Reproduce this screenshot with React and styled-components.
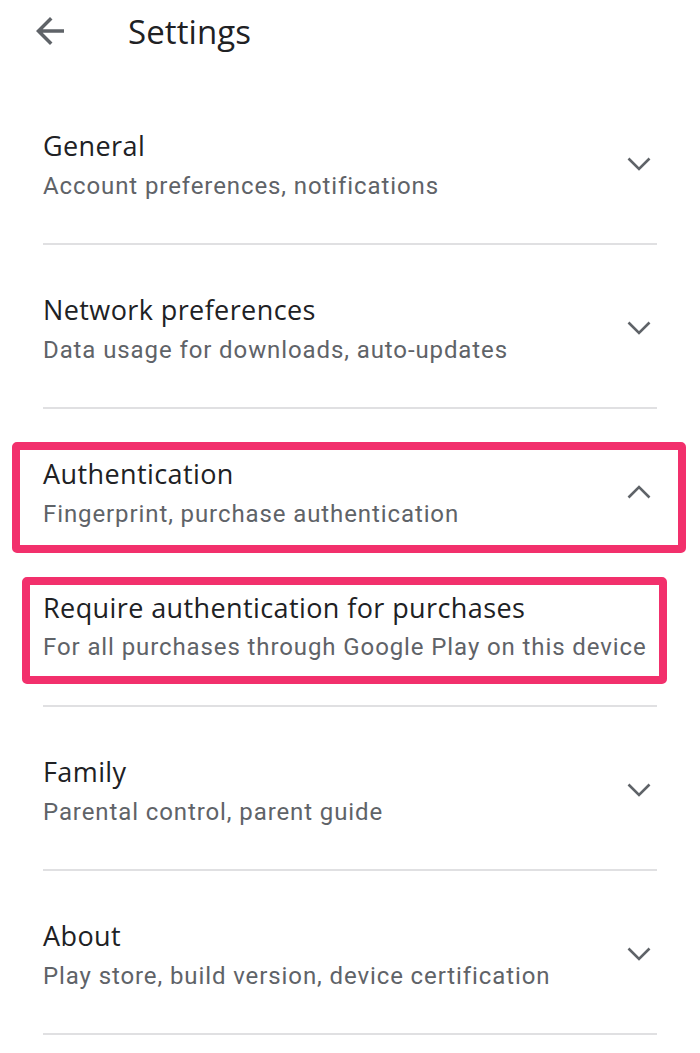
import React from "react";
import styled, { createGlobalStyle } from "styled-components";

const Global = createGlobalStyle`
  html, body { margin: 0; padding: 0; background: #ffffff; }
  body { font-family: "Roboto", "Noto Sans", sans-serif; -webkit-font-smoothing: antialiased; }
`;

const Page = styled.div`
  width: 700px;
  min-height: 1053px;
  background: #fff;
  display: flex;
  flex-direction: column;
`;

const Header = styled.header`
  height: 62px;
  display: flex;
  align-items: center;
  padding-left: 29px;
  gap: 57px;
`;

const BackButton = styled.button`
  border: 0;
  background: none;
  padding: 0;
  width: 42px;
  height: 42px;
  display: flex;
  align-items: center;
  justify-content: center;
  color: #5f6368;
  svg { display: block; }
`;

const Title = styled.h1`
  margin: 0;
  font-family: "Open Sans", "Roboto", sans-serif;
  font-weight: 400;
  font-size: 33px;
  color: #202124;
  letter-spacing: 0.1px;
`;

const List = styled.div`
  display: flex;
  flex-direction: column;
  padding-top: 19px;
`;

const Row = styled.div`
  display: flex;
  align-items: center;
  margin: 0 43px;
  padding: 45px 6px 37px 0;
`;

const Text = styled.div`
  flex: 1;
  display: flex;
  flex-direction: column;
  min-width: 0;
`;

const ItemTitle = styled.div`
  font-family: "Open Sans", "Roboto", sans-serif;
  font-size: 27px;
  line-height: 40px;
  letter-spacing: 0.4px;
  color: #202124;
  white-space: nowrap;
`;

const ItemSub = styled.div`
  font-family: "Roboto", sans-serif;
  font-size: 24px;
  line-height: ${(p) => p.$lh || 40}px;
  color: #5f6368;
  letter-spacing: 0.9px;
  white-space: nowrap;
`;

const Divider = styled.div`
  height: 2px;
  margin: 0 43px;
  background: #e0e0e2;
`;

const Highlight = styled.div`
  border: 8px solid #f2306c;
  border-radius: 5px;
  display: flex;
  align-items: center;
  margin: ${(p) => p.$margin};
  padding: ${(p) => p.$padding};
`;

const Group = styled.div`
  display: flex;
  flex-direction: column;
  padding: 33px 0 21px;
  gap: 24px;
`;

const Chevron = styled.svg`
  flex: none;
  display: block;
  color: #5f6368;
  margin-bottom: 5px;
`;

const ChevronIcon = ({ up }) => (
  <Chevron width="24" height="14" viewBox="0 0 24 14" fill="none">
    <path
      d={up ? "M1.5 12.5 L12 2 L22.5 12.5" : "M1.5 1.5 L12 12 L22.5 1.5"}
      stroke="currentColor"
      strokeWidth="2.6"
    />
  </Chevron>
);

const ArrowBack = () => (
  <svg width="42" height="42" viewBox="0 0 24 24" fill="currentColor">
    <path d="M20 11H7.83l5.59-5.59L12 4l-8 8 8 8 1.41-1.41L7.83 13H20v-2z" />
  </svg>
);

const items = [
  { title: "General", sub: "Account preferences, notifications" },
  { title: "Network preferences", sub: "Data usage for downloads, auto-updates" },
];

const items2 = [
  { title: "Family", sub: "Parental control, parent guide" },
  { title: "About", sub: "Play store, build version, device certification" },
];

const Item = ({ title, sub }) => (
  <>
    <Row>
      <Text>
        <ItemTitle>{title}</ItemTitle>
        <ItemSub>{sub}</ItemSub>
      </Text>
      <ChevronIcon />
    </Row>
    <Divider />
  </>
);

export default function App() {
  return (
    <Page>
      <Global />
      <Header>
        <BackButton aria-label="Back">
          <ArrowBack />
        </BackButton>
        <Title>Settings</Title>
      </Header>
      <List>
        {items.map((it) => (
          <Item key={it.title} {...it} />
        ))}
        <Group>
          <Highlight $margin="0 14px 0 12px" $padding="4px 27px 11px 23px">
            <Text>
              <ItemTitle>Authentication</ItemTitle>
              <ItemSub>Fingerprint, purchase authentication</ItemSub>
            </Text>
            <ChevronIcon up />
          </Highlight>
          <Highlight $margin="0 33px 0 22px" $padding="3px 0 10px 13px">
            <Text>
              <ItemTitle>Require authentication for purchases</ItemTitle>
              <ItemSub $lh={38}>For all purchases through Google Play on this device</ItemSub>
            </Text>
          </Highlight>
        </Group>
        <Divider />
        {items2.map((it) => (
          <Item key={it.title} {...it} />
        ))}
      </List>
    </Page>
  );
}
